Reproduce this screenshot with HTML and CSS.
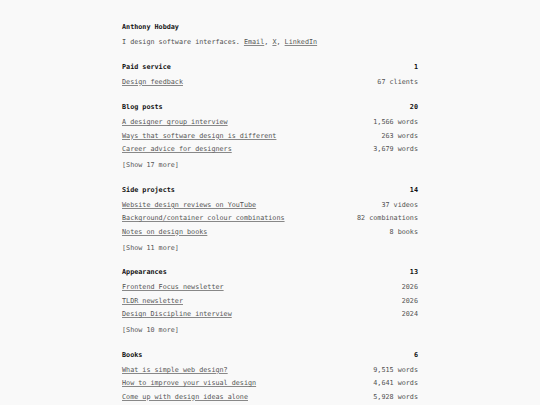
FILE: index.html
```html
<!DOCTYPE html>
<html lang="en">
<head>
<meta charset="utf-8">
<title>Anthony Hobday</title>
<link rel="stylesheet" href="styles.css">
</head>
<body>
<main class="page">
  <header class="intro">
    <h1 class="name">Anthony Hobday</h1>
    <p class="bio">I design software interfaces. <a href="#">Email</a>, <a href="#">X</a>, <a href="#">LinkedIn</a></p>
  </header>

  <section class="section">
    <div class="row head"><span>Paid service</span><span>1</span></div>
    <div class="row"><a href="#">Design feedback</a><span>67 clients</span></div>
  </section>

  <section class="section">
    <div class="row head"><span>Blog posts</span><span>20</span></div>
    <div class="row"><a href="#">A designer group interview</a><span>1,566 words</span></div>
    <div class="row"><a href="#">Ways that software design is different</a><span>263 words</span></div>
    <div class="row"><a href="#">Career advice for designers</a><span>3,679 words</span></div>
    <div class="more">[Show 17 more]</div>
  </section>

  <section class="section">
    <div class="row head"><span>Side projects</span><span>14</span></div>
    <div class="row"><a href="#">Website design reviews on YouTube</a><span>37 videos</span></div>
    <div class="row"><a href="#">Background/container colour combinations</a><span>82 combinations</span></div>
    <div class="row"><a href="#">Notes on design books</a><span>8 books</span></div>
    <div class="more">[Show 11 more]</div>
  </section>

  <section class="section">
    <div class="row head"><span>Appearances</span><span>13</span></div>
    <div class="row"><a href="#">Frontend Focus newsletter</a><span>2026</span></div>
    <div class="row"><a href="#">TLDR newsletter</a><span>2026</span></div>
    <div class="row"><a href="#">Design Discipline interview</a><span>2024</span></div>
    <div class="more">[Show 10 more]</div>
  </section>

  <section class="section">
    <div class="row head"><span>Books</span><span>6</span></div>
    <div class="row"><a href="#">What is simple web design?</a><span>9,515 words</span></div>
    <div class="row"><a href="#">How to improve your visual design</a><span>4,641 words</span></div>
    <div class="row"><a href="#">Come up with design ideas alone</a><span>5,928 words</span></div>
    <div class="more">[Show 3 more]</div>
  </section>
</main>
</body>
</html>
```

FILE: styles.css
```css
html, body {
  margin: 0;
  padding: 0;
  background: #f9f9f9;
}

body {
  font-family: "DejaVu Sans Mono", "Liberation Mono", monospace;
  font-size: 6.75px;
  line-height: 13.4px;
  color: #505050;
}

.page {
  width: 296px;
  margin: 0 auto;
  padding-top: 20.8px;
}

.name {
  margin: 0 0 1.6px;
  font-size: 6.75px;
  font-weight: bold;
  color: #111;
  line-height: 13.4px;
}

.bio {
  margin: 0 0 11.6px;
}

a,
a:visited {
  color: #555;
  text-decoration: underline;
  text-decoration-color: #888;
  text-decoration-thickness: 0.5px;
  text-underline-offset: 1px;
}

.section {
  margin-bottom: 12.2px;
}

.row {
  display: flex;
  justify-content: space-between;
}

.head {
  font-weight: bold;
  color: #111;
  margin-bottom: 1.6px;
}

.more {
  margin-top: 2.6px;
  margin-bottom: -0.9px;
  color: #555;
}
```
